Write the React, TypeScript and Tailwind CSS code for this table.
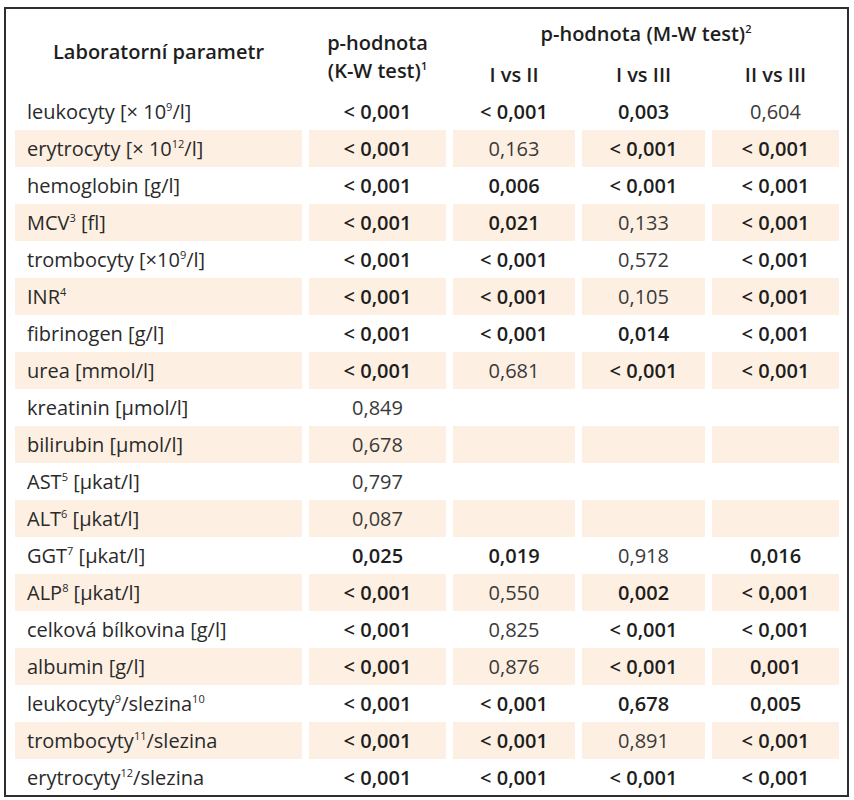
import React from "react";

type Cell = { v: string; b?: boolean } | null;
type Row = { label: React.ReactNode; cells: Cell[] };

const B = (v: string): Cell => ({ v, b: true });
const N = (v: string): Cell => ({ v });

const rows: Row[] = [
  { label: <>leukocyty [× 10<sup>9</sup>/l]</>, cells: [B("< 0,001"), B("< 0,001"), B("0,003"), N("0,604")] },
  { label: <>erytrocyty [× 10<sup>12</sup>/l]</>, cells: [B("< 0,001"), N("0,163"), B("< 0,001"), B("< 0,001")] },
  { label: <>hemoglobin [g/l]</>, cells: [B("< 0,001"), B("0,006"), B("< 0,001"), B("< 0,001")] },
  { label: <>MCV<sup>3</sup> [fl]</>, cells: [B("< 0,001"), B("0,021"), N("0,133"), B("< 0,001")] },
  { label: <>trombocyty [×10<sup>9</sup>/l]</>, cells: [B("< 0,001"), B("< 0,001"), N("0,572"), B("< 0,001")] },
  { label: <>INR<sup>4</sup></>, cells: [B("< 0,001"), B("< 0,001"), N("0,105"), B("< 0,001")] },
  { label: <>fibrinogen [g/l]</>, cells: [B("< 0,001"), B("< 0,001"), B("0,014"), B("< 0,001")] },
  { label: <>urea [mmol/l]</>, cells: [B("< 0,001"), N("0,681"), B("< 0,001"), B("< 0,001")] },
  { label: <>kreatinin [μmol/l]</>, cells: [N("0,849"), null, null, null] },
  { label: <>bilirubin [μmol/l]</>, cells: [N("0,678"), null, null, null] },
  { label: <>AST<sup>5</sup> [μkat/l]</>, cells: [N("0,797"), null, null, null] },
  { label: <>ALT<sup>6</sup> [μkat/l]</>, cells: [N("0,087"), null, null, null] },
  { label: <>GGT<sup>7</sup> [μkat/l]</>, cells: [B("0,025"), B("0,019"), N("0,918"), B("0,016")] },
  { label: <>ALP<sup>8</sup> [μkat/l]</>, cells: [B("< 0,001"), N("0,550"), B("0,002"), B("< 0,001")] },
  { label: <>celková bílkovina [g/l]</>, cells: [B("< 0,001"), N("0,825"), B("< 0,001"), B("< 0,001")] },
  { label: <>albumin [g/l]</>, cells: [B("< 0,001"), N("0,876"), B("< 0,001"), B("0,001")] },
  { label: <>leukocyty<sup>9</sup>/slezina<sup>10</sup></>, cells: [B("< 0,001"), B("< 0,001"), B("0,678"), B("0,005")] },
  { label: <>trombocyty<sup>11</sup>/slezina</>, cells: [B("< 0,001"), B("< 0,001"), N("0,891"), B("< 0,001")] },
  { label: <>erytrocyty<sup>12</sup>/slezina</>, cells: [B("< 0,001"), B("< 0,001"), B("< 0,001"), B("< 0,001")] },
];

export default function App() {
  return (
    <div className="w-[854px] h-[800px] bg-white pt-[7px] pl-[4px]" style={{ fontFamily: "'Open Sans', Lato, sans-serif" }}>
      <div className="w-[845px] h-[790px] border-2 border-[#2e2e2e] pl-[9px] pr-[9px] text-[20px] text-[#2a2a2a] [&_sup]:text-[11px] [&_sup]:relative [&_sup]:top-[-0.7em] [&_sup]:align-baseline [&_sup]:leading-none">
        <div className="grid grid-cols-[287px_137px_122px_123px_127px] gap-x-[7px] grid-rows-[48px_36px]">
          <div className="row-span-2 flex items-center justify-center pt-[2px] font-semibold text-[#1e1e1e]">
            <span>Laboratorní parametr</span>
          </div>
          <div className="row-span-2 flex flex-col items-center justify-center pt-[10px] font-semibold text-[#1e1e1e] gap-[1px]">
            <span className="leading-[27px]">p-hodnota</span>
            <span className="leading-[27px]">(K-W test)<sup>1</sup></span>
          </div>
          <div className="col-span-3 flex items-center justify-center pt-[2px] font-semibold text-[#1e1e1e]">
            <span>p-hodnota (M-W test)<sup>2</sup></span>
          </div>
          <div className="flex items-center justify-center font-semibold text-[#1e1e1e]"><span>I vs II</span></div>
          <div className="flex items-center justify-center font-semibold text-[#1e1e1e]"><span>I vs III</span></div>
          <div className="flex items-center justify-center font-semibold text-[#1e1e1e]"><span>II vs III</span></div>
        </div>
        <div className="grid grid-cols-[287px_137px_122px_123px_127px] gap-x-[7px] auto-rows-[37px]">
          {rows.map((r, i) => {
            const bg = i % 2 === 1 ? "bg-[#fdf0e2]" : "";
            return (
              <React.Fragment key={i}>
                <div className={`flex items-center pl-[12px] ${bg}`}>
                  <span>{r.label}</span>
                </div>
                {r.cells.map((c, j) => (
                  <div
                    key={j}
                    className={`flex items-center justify-center ${bg} ${c && c.b ? "font-semibold text-[#1e1e1e]" : "text-[#3a3a3a]"}`}
                  >
                    <span>{c ? c.v : ""}</span>
                  </div>
                ))}
              </React.Fragment>
            );
          })}
        </div>
      </div>
    </div>
  );
}
